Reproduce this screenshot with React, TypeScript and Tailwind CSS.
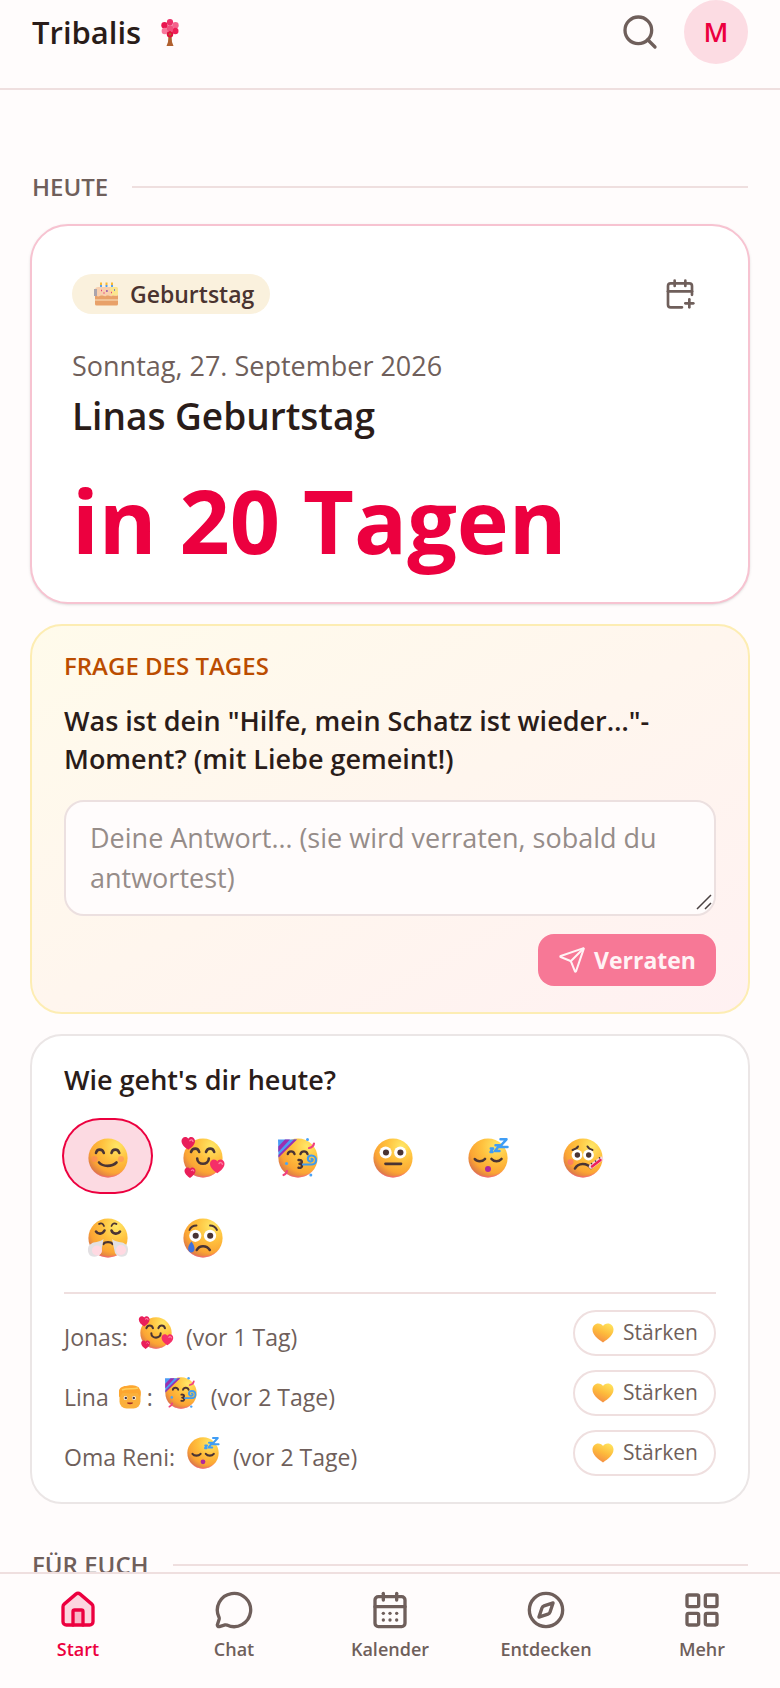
import { useId, useState } from "react";
import type { ReactNode } from "react";
import { CalendarDays, CalendarPlus, Compass, House, LayoutGrid, MessageCircle, Search, Send } from "lucide-react";

type EmojiProps = { className?: string };

const ink = "#4a3434";

const Face = ({ className, children }: { className?: string; children: ReactNode }) => {
  const id = useId();
  return (
    <svg viewBox="0 0 40 40" className={`shrink-0 overflow-visible ${className ?? ""}`} aria-hidden="true" fill="none" strokeLinecap="round" strokeLinejoin="round">
      <defs>
        <radialGradient id={`${id}a`} cx="0.72" cy="0.2" r="0.85">
          <stop offset="0" stopColor="#ffe766" />
          <stop offset="0.45" stopColor="#ffc03d" />
          <stop offset="0.8" stopColor="#fba534" />
          <stop offset="1" stopColor="#dd7a48" />
        </radialGradient>
        <radialGradient id={`${id}b`} cx="0.5" cy="0.38" r="0.63">
          <stop offset="0.9" stopColor="#ff5f8f" stopOpacity="0" />
          <stop offset="1" stopColor="#ff5f8f" />
        </radialGradient>
      </defs>
      <circle cx="20" cy="20" r="19.6" fill={`url(#${id}a)`} />
      <circle cx="20" cy="20" r="19.6" fill={`url(#${id}b)`} />
      {children}
    </svg>
  );
};

const Heart = ({ x, y, s, color = "#e91e5a" }: { x: number; y: number; s: number; color?: string }) => (
  <g transform={`translate(${x} ${y}) scale(${s / 20})`}>
    <path d="M10 19C5 15.500 0 11.500 0 6C0 2.500 2.500 0 5.500 0C7.500 0 9.200 1 10 2.600C10.800 1 12.500 0 14.500 0C17.500 0 20 2.500 20 6C20 11.500 15 15.500 10 19Z" fill={color} />
    <path d="M12.500 5.500C14 3.500 16.500 4 17 6.500" stroke="#ff7fa5" strokeWidth="2" />
  </g>
);

const OpenEyes = ({ left, right, y, r }: { left: number; right: number; y: number; r: number }) => (
  <>
    <circle cx={left} cy={y} r={r} fill="#fff" />
    <circle cx={right} cy={y} r={r} fill="#fff" />
    <circle cx={left + 0.4} cy={y} r={r / 2} fill={ink} />
    <circle cx={right + 0.2} cy={y} r={r / 2} fill={ink} />
  </>
);

const Smiling = ({ className }: EmojiProps) => (
  <Face className={className}>
    <circle cx="6.500" cy="21" r="3" fill="#ff7a6b" opacity="0.45" />
    <circle cx="33" cy="21" r="3" fill="#ff7a6b" opacity="0.45" />
    <path d="M8 15C9 10.500 14.500 10.500 15.800 15M23.500 15C24.500 10.500 30 10.500 31.300 15" stroke={ink} strokeWidth="2.600" />
    <path d="M11 24.500C15 29 24 29 28.500 24.500" stroke={ink} strokeWidth="2.600" />
  </Face>
);

const Loving = ({ className }: EmojiProps) => (
  <Face className={className}>
    <path d="M8 14C9.500 9.500 15 9.500 16.200 14M23 14C24.500 9.500 30 9.500 31.200 14" stroke={ink} strokeWidth="2.600" />
    <path d="M14.200 20.500C14.200 27.500 25.800 27.500 25.800 20.500" stroke={ink} strokeWidth="2.600" />
    <Heart x={-1.5} y={-1} s={13.5} />
    <Heart x={1.5} y={29.5} s={11} />
    <Heart x={27} y={21.5} s={14.5} color="#f52e68" />
  </Face>
);

const Party = ({ className }: EmojiProps) => (
  <Face className={className}>
    <path d="M0 1.500H19C13 6 6 13 0.500 19.500Z" fill="#4b9bf5" />
    <path d="M7 1.500H12L0.300 14V8.500ZM16 1.500H19L0.500 19.500V17Z" fill="#9b2fae" />
    <path d="M9.800 16C10.500 12.500 15.500 12.500 16.500 16M22.500 16C23.500 12.500 28.500 12.500 29.500 16" stroke={ink} strokeWidth="2.400" />
    <path d="M20.500 22C25 21.500 24.500 25.500 21.500 25.800C25 26 25 30.500 20.500 29.800" stroke={ink} strokeWidth="2.400" />
    <path d="M25 26.500H34C39.500 26.500 39.500 17.500 33.500 17.500C28.500 17.500 29 24 33 23.500C35.500 23 35 20.500 33.500 20.800" stroke="#3f9bee" strokeWidth="2.200" />
    <path d="M31 10C34 9.500 35.500 8 36 5.500M5.500 37C7 36.500 8.500 35 9 33" stroke="#f04180" strokeWidth="2.200" />
    <circle cx="29.500" cy="1.500" r="1.500" fill="#4ba3f5" />
    <circle cx="8.500" cy="25.500" r="1.600" fill="#4ba3f5" />
    <circle cx="32.800" cy="37" r="1.500" fill="#4ba3f5" />
  </Face>
);

const Neutral = ({ className }: EmojiProps) => (
  <Face className={className}>
    <OpenEyes left={12.6} right={27.2} y={14.5} r={6.1} />
    <path d="M12.500 25.800H28" stroke={ink} strokeWidth="2.700" />
  </Face>
);

const Sleeping = ({ className }: EmojiProps) => (
  <Face className={className}>
    <path d="M6.800 21C9 24 14.500 24 17 21M23.500 21C26 24 31 24 33.500 21" stroke={ink} strokeWidth="2.600" />
    <circle cx="20" cy="31" r="3" fill="#b0289b" />
    <path d="M32.500 1.300H38.500L31.500 9H39.500M27.500 7.300H31.500L27 13H31.500M22.800 10.500H25L22.500 14H24.500" stroke="#3f9df5" strokeWidth="2.500" />
  </Face>
);

const Sick = ({ className }: EmojiProps) => (
  <Face className={className}>
    <circle cx="7.500" cy="24" r="3" fill="#ff5c80" opacity="0.55" />
    <path d="M9.500 12C12 11.500 14 10.500 15 8.500M24.500 8.500C25.500 10.500 27 11.500 29.500 12" stroke={ink} strokeWidth="2" />
    <OpenEyes left={14} right={25.5} y={17} r={5.4} />
    <path d="M12 30.500C15 24.500 24 24.500 28 30" stroke={ink} strokeWidth="2.600" />
    <path d="M28 28.500L38 21" stroke="#f7d5dd" strokeWidth="4.500" />
    <path d="M29 28.500L37.500 22" stroke="#ee1f5b" strokeWidth="2.400" />
    <path d="M28.500 25.500V25.600M32.500 23V23.100M36.500 19.800V19.900" stroke={ink} strokeWidth="1.600" />
  </Face>
);

const Huffing = ({ className }: EmojiProps) => (
  <Face className={className}>
    <path d="M11 6C13 4.500 15 5.500 16 8M23.500 8C24.500 5.500 26.500 4.500 28.500 6" stroke={ink} strokeWidth="1.700" />
    <path d="M8 13.500C10 16.500 14.500 16.500 16.500 12.500M23.500 12.500C25 16.500 30 16.500 32 13.500" stroke={ink} strokeWidth="2.600" />
    <path d="M15.500 26C17 23.500 23 23.500 24.500 26" stroke={ink} strokeWidth="2.200" />
    <path d="M15.500 21L13 35C10 40 2.500 39.500 1 36C-1 32 0 27 3 26C6 23 11 25 15.500 21Z" fill="#e3e0e3" />
    <path d="M24 21L27 35C30 40 37.500 39.500 39 36C41 32 40 27 37 26C34 23 28.500 25 24 21Z" fill="#e3e0e3" />
    <circle cx="9" cy="32.500" r="5" fill="#ffd9e2" />
    <circle cx="33" cy="32" r="5" fill="#ffd9e2" />
  </Face>
);

const Crying = ({ className }: EmojiProps) => (
  <Face className={className}>
    <path d="M6.500 12C8 8.500 11 7.500 13.500 7.500M27 7.500C30 7.500 32.500 9 34 12" stroke={ink} strokeWidth="1.900" />
    <OpenEyes left={12.3} right={27} y={17.8} r={6.1} />
    <path d="M13.800 32C16.500 27 23.500 27 26.800 32" stroke={ink} strokeWidth="2.600" />
    <path d="M8.500 23.500C5.500 27 5.200 29 5.200 31C5.200 35.500 11.500 35.500 11.500 31C11.500 29 11 27 8.500 23.500Z" fill="#3f72dd" />
  </Face>
);

const BlondPerson = ({ className }: EmojiProps) => (
  <svg viewBox="0 0 22 24" className={`shrink-0 ${className ?? ""}`} aria-hidden="true">
    <rect x="0.500" y="2" width="21" height="21.500" rx="7" fill="#fbb03b" />
    <path d="M0 12V6C0 3.500 3 1 7 1C11 -0.500 20 0 20.500 4C22.500 6 22 9 21 12C20 11 19.500 9 18.500 8C13 8.500 7 8.500 3.500 8C2.500 9 2 12 0 12Z" fill="#fda62f" />
    <path d="M3 5C8 2.500 14 4.500 19 3" stroke="#ffcf5c" strokeWidth="1.500" fill="none" />
    <circle cx="6.500" cy="13" r="1.900" fill="#fff" />
    <circle cx="15" cy="13" r="1.900" fill="#fff" />
    <circle cx="6.800" cy="13" r="1.200" fill={ink} />
    <circle cx="14.800" cy="13" r="1.200" fill={ink} />
    <path d="M8.500 18C10 19 12 19 13.500 18Z" fill="#9d2a2a" stroke="#9d2a2a" strokeLinejoin="round" />
  </svg>
);

const YellowHeart = () => {
  const id = useId();
  return (
    <svg viewBox="0 0 20 19" className="h-5 w-6 shrink-0" aria-hidden="true">
      <linearGradient id={id} x1="0.8" y1="0" x2="0.3" y2="1">
        <stop offset="0" stopColor="#ffe35c" />
        <stop offset="0.5" stopColor="#fdbb3c" />
        <stop offset="1" stopColor="#f48a45" />
      </linearGradient>
      <path d="M10 18.500C5 15 0 11.500 0 6.200C0 3 2.500 0.500 5.500 0.500C7.500 0.500 9.200 1.400 10 2.900C10.800 1.400 12.500 0.500 14.500 0.500C17.500 0.500 20 3 20 6.200C20 11.500 15 15 10 18.500Z" fill={`url(#${id})`} />
    </svg>
  );
};

const Cake = () => (
  <svg viewBox="0 0 24 24" className="size-6 shrink-0" aria-hidden="true">
    <path d="M7 0.500V3.500M12.500 0.500V3.500M18 0.500V3.500" stroke="#f9b934" strokeWidth="2" />
    <path d="M7 3V6M12.500 3V6M18 3V6" stroke="#4b9bf5" strokeWidth="1.800" />
    <rect x="1" y="12" width="23" height="11.500" rx="1.500" fill="#e8a169" />
    <path d="M1 17.500H24V18.500H1Z" fill="#fbe3c2" />
    <path d="M1 7.500C1 6 2.500 5 4 5H22C23.500 5 24 6 24 7.500V13C22.500 15 20 12.500 18 14C16 15 14 12.500 12 14C10 15 8 12.500 6 14C4 15 1.500 14 1 12Z" fill="#f8cfae" />
    <path d="M16 5H22C23.500 5 24 6 24 7.500V13C22 14.500 19 12.500 17 13.500Z" fill="#fbe58e" />
    <path d="M0 7H3V14H0Z" fill="#aaa5ad" />
    <path d="M7 8.500h1M12 9h1.500M9.500 11h1M17 10.500h1" stroke="#e9417c" strokeWidth="1.300" />
    <path d="M12.500 9h1M20 8h1" stroke="#4972d8" strokeWidth="1.300" />
  </svg>
);

const Tree = () => (
  <svg viewBox="0 0 18 27" className="h-[27px] w-[18px] shrink-0" aria-hidden="true">
    <path d="M7.500 16H10.500L11 23L12.500 27H5.500L7 23Z" fill="#b0602e" />
    <circle cx="9" cy="3.200" r="3.100" fill="#ec2f68" />
    <circle cx="3.500" cy="6.300" r="3.200" fill="#e9154f" />
    <circle cx="14.500" cy="6.300" r="3.200" fill="#f4638c" />
    <circle cx="3.800" cy="12" r="3.200" fill="#f8789c" />
    <circle cx="14.300" cy="12" r="3.200" fill="#ee1e56" />
    <circle cx="9" cy="9.300" r="3.200" fill="#f0507d" />
    <circle cx="9" cy="15.300" r="3.200" fill="#e0103c" />
    <circle cx="9" cy="15.300" r="1.200" fill="#b0602e" />
  </svg>
);

const moods = [
  { label: "Glücklich", Icon: Smiling },
  { label: "Verliebt", Icon: Loving },
  { label: "Feierlaune", Icon: Party },
  { label: "Neutral", Icon: Neutral },
  { label: "Müde", Icon: Sleeping },
  { label: "Krank", Icon: Sick },
  { label: "Genervt", Icon: Huffing },
  { label: "Traurig", Icon: Crying },
];

const familyMoods = [
  { name: "Jonas", avatar: false, Icon: Loving, when: "(vor 1 Tag)" },
  { name: "Lina", avatar: true, Icon: Party, when: "(vor 2 Tage)" },
  { name: "Oma Reni", avatar: false, Icon: Sleeping, when: "(vor 2 Tage)" },
];

const navItems = [
  { label: "Start", Icon: House },
  { label: "Chat", Icon: MessageCircle },
  { label: "Kalender", Icon: CalendarDays },
  { label: "Entdecken", Icon: Compass },
  { label: "Mehr", Icon: LayoutGrid },
];

const SectionHeading = ({ children }: { children: ReactNode }) => (
  <div className="flex items-center gap-6 px-0.5">
    <h2 className="text-[24px] leading-[34px] font-semibold text-[#6f5f5b] uppercase">{children}</h2>
    <div className="h-0.5 flex-1 bg-[#efdfdf]" />
  </div>
);

const App = () => {
  const [mood, setMood] = useState("Glücklich");
  const [answer, setAnswer] = useState("");

  return (
    <div className="min-h-screen bg-[#fffcfc] pb-20 font-['Open_Sans','Noto_Sans',sans-serif] text-[#2a1c19]">
      {/* Header */}
      <header className="flex items-center justify-between border-b-2 border-[#efdfdf] px-8 pb-6">
        <div className="flex items-center gap-5">
          <h1 className="text-[31px] leading-[50px] font-semibold">Tribalis</h1>
          <Tree />
        </div>
        <div className="flex items-center gap-6">
          <button type="button" aria-label="Suchen" className="text-[#6f5f5b]">
            <Search className="size-10" />
          </button>
          <button type="button" aria-label="Profil" className="size-16 rounded-full bg-[#fcdce3] text-[27px] font-semibold text-[#ec003f]">
            M
          </button>
        </div>
      </header>

      <main className="px-[30px] pt-20">
        <SectionHeading>Heute</SectionHeading>

        {/* Countdown */}
        <section className="mt-5 rounded-[38px] border-2 border-[#f7c3d1] bg-white px-10 pt-10 pb-9 shadow-sm">
          <div className="flex items-center justify-between">
            <span className="flex h-10 items-center gap-3 rounded-full bg-[#faf1dd] pr-4 pl-[22px] text-[23px] font-semibold text-[#4a3430]">
              <Cake />
              Geburtstag
            </span>
            <button type="button" aria-label="Zum Kalender hinzufügen" className="flex size-14 items-center justify-center text-[#6f5f5b]">
              <CalendarPlus className="size-8" />
            </button>
          </div>
          <p className="mt-6 text-[27px] leading-10 text-[#6f5f5b]">Sonntag, 27. September 2026</p>
          <h3 className="mt-1 text-[37px] leading-[52px] font-semibold">Linas Geburtstag</h3>
          <p className="mt-8 text-[88px] leading-[92px] font-bold text-[#ec003f]">in 20 Tagen</p>
        </section>

        {/* Question of the day */}
        <section className="mt-5 rounded-[32px] border-2 border-[#fdedb3] bg-linear-to-br from-[#fffbeb] via-[#fff6ee] to-[#fff1f2] px-8 pt-6 pb-[26px]">
          <h3 className="text-[24px] leading-8 font-semibold text-[#bb4d00] uppercase">Frage des Tages</h3>
          <label htmlFor="answer" className="mt-5 block text-[27px] leading-[38px] font-semibold">
            Was ist dein "Hilfe, mein Schatz ist wieder…"-Moment? (mit Liebe gemeint!)
          </label>
          <div className="relative mt-[22px]">
            <textarea
              id="answer"
              rows={2}
              value={answer}
              onChange={(e) => setAnswer(e.target.value)}
              placeholder="Deine Antwort… (sie wird verraten, sobald du antwortest)"
              className="block w-full resize-none rounded-[20px] border-2 border-[#ece0e0] bg-[#fffcfc] px-6 py-4 text-[27px] leading-10 outline-none placeholder:text-[#968c89]"
            />
            <svg viewBox="0 0 16 16" className="pointer-events-none absolute right-1 bottom-1.5 size-4" aria-hidden="true">
              <path d="M1 15L15 1M9 15L15 9" stroke="#4a4141" strokeWidth="1.500" />
            </svg>
          </div>
          <div className="mt-[18px] flex justify-end">
            <button type="button" className="flex h-[52px] items-center gap-2 rounded-2xl bg-[#f77896] px-5 text-[23px] font-bold text-[#fff3f5]">
              <Send className="size-7" strokeWidth={1.75} />
              Verraten
            </button>
          </div>
        </section>

        {/* Mood check-in */}
        <section className="mt-5 rounded-[32px] border-2 border-[#ebe6e6] bg-white px-8 py-[26px]">
          <h3 className="text-[27px] leading-9 font-semibold">Wie geht's dir heute?</h3>
          <div className="mt-[22px] flex flex-wrap gap-2">
            {moods.map(({ label, Icon }) => (
              <button
                key={label}
                type="button"
                aria-label={label}
                aria-pressed={mood === label}
                onClick={() => setMood(label)}
                className={`flex h-[72px] w-[87px] items-center justify-center rounded-full pt-1 ${mood === label ? "bg-[#fcdae2] ring-2 ring-[#ec003f]" : ""}`}
              >
                <Icon className="size-10" />
              </button>
            ))}
          </div>

          <ul className="mt-5 flex flex-col gap-3.5 border-t-2 border-[#efdfdf] pt-4">
            {familyMoods.map(({ name, avatar, Icon, when }) => (
              <li key={name} className="flex h-[46px] items-center justify-between text-[23px] text-[#6f5f5b]">
                <div className="flex items-center">
                  <span className="flex items-center pt-2">
                    {name}
                    {avatar && <BlondPerson className="mr-1.5 ml-2.5 h-6 w-[22px]" />}:
                  </span>
                  <Icon className="mr-3.5 ml-3 size-8" />
                  <span className="pt-2">{when}</span>
                </div>
                <button type="button" className="flex h-[46px] items-center gap-2 rounded-full border-2 border-[#efdfdf] px-4 text-[21px]">
                  <YellowHeart />
                  Stärken
                </button>
              </li>
            ))}
          </ul>
        </section>

        <div className="mt-11">
          <SectionHeading>Für euch</SectionHeading>
        </div>
      </main>

      {/* Bottom navigation */}
      <nav className="fixed inset-x-0 bottom-0 grid grid-cols-5 border-t-2 border-[#efdfdf] bg-[#fffcfc] pt-4 pb-6">
        {navItems.map(({ label, Icon }, i) => (
          <a
            key={label}
            href={`#${label.toLowerCase()}`}
            className={`flex flex-col items-center gap-1 text-[18px] leading-[30px] font-semibold ${i === 0 ? "text-[#ec003f]" : "text-[#6f5f5b]"}`}
          >
            <Icon className={`size-10 ${i === 0 ? "fill-[#ec003f]/15" : ""}`} />
            {label}
          </a>
        ))}
      </nav>
    </div>
  );
};

export default App;
